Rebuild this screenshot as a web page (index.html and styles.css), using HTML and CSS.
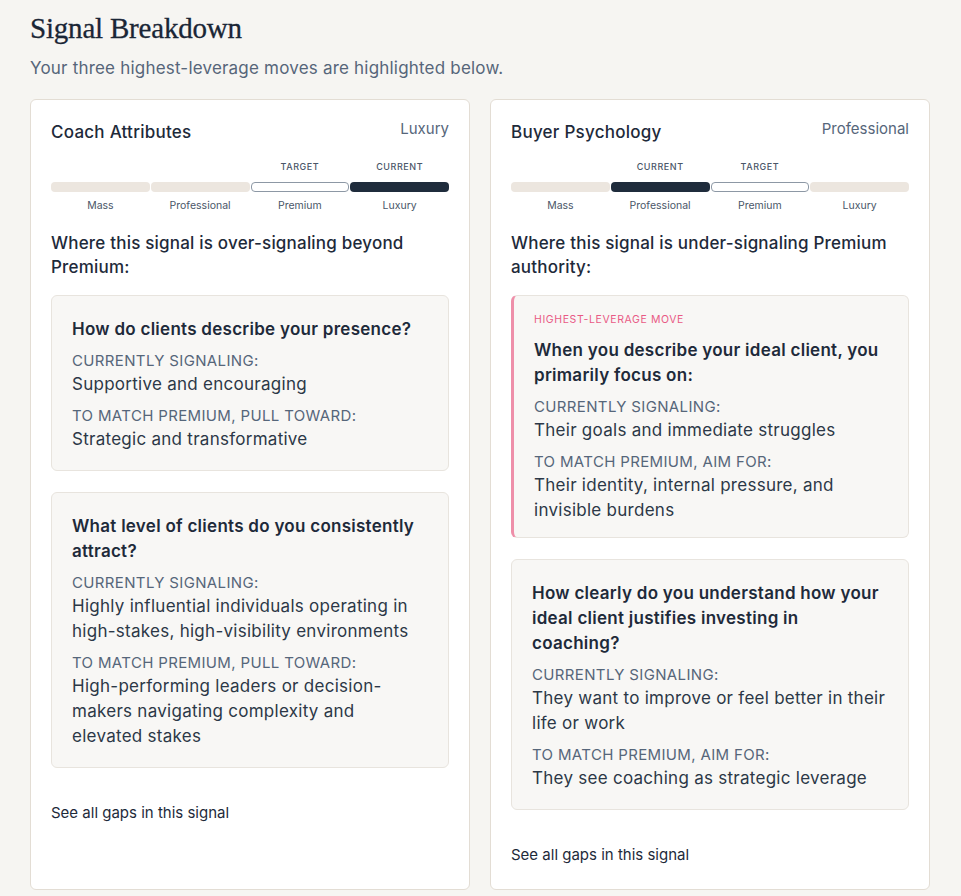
FILE: index.html
```html
<!DOCTYPE html>
<html lang="en">
<head>
<meta charset="utf-8">
<title>Signal Breakdown</title>
<link rel="stylesheet" href="styles.css">
</head>
<body>
<main class="page">
  <h1 class="title">Signal Breakdown</h1>
  <p class="subtitle">Your three highest-leverage moves are highlighted below.</p>

  <div class="grid">
    <section class="card">
      <div class="card-head">
        <h2 class="card-title">Coach Attributes</h2>
        <span class="card-level">Luxury</span>
      </div>
      <div class="scale">
        <div class="scale-row tags">
          <span></span><span></span><span>TARGET</span><span>CURRENT</span>
        </div>
        <div class="scale-row bars">
          <span class="seg"></span><span class="seg"></span><span class="seg target"></span><span class="seg current"></span>
        </div>
        <div class="scale-row names">
          <span>Mass</span><span>Professional</span><span>Premium</span><span>Luxury</span>
        </div>
      </div>
      <h3 class="gap-heading">Where this signal is over-signaling beyond Premium:</h3>
      <div class="items">
        <div class="item">
          <p class="q">How do clients describe your presence?</p>
          <p class="label">CURRENTLY SIGNALING:</p>
          <p class="value">Supportive and encouraging</p>
          <p class="label">TO MATCH PREMIUM, PULL TOWARD:</p>
          <p class="value">Strategic and transformative</p>
        </div>
        <div class="item">
          <p class="q">What level of clients do you consistently attract?</p>
          <p class="label">CURRENTLY SIGNALING:</p>
          <p class="value">Highly influential individuals operating in high-stakes, high-visibility environments</p>
          <p class="label">TO MATCH PREMIUM, PULL TOWARD:</p>
          <p class="value">High-performing leaders or decision-makers navigating complexity and elevated stakes</p>
        </div>
      </div>
      <a class="see-all" href="#">See all gaps in this signal</a>
    </section>

    <section class="card">
      <div class="card-head">
        <h2 class="card-title">Buyer Psychology</h2>
        <span class="card-level">Professional</span>
      </div>
      <div class="scale">
        <div class="scale-row tags">
          <span></span><span>CURRENT</span><span>TARGET</span><span></span>
        </div>
        <div class="scale-row bars">
          <span class="seg"></span><span class="seg current"></span><span class="seg target"></span><span class="seg"></span>
        </div>
        <div class="scale-row names">
          <span>Mass</span><span>Professional</span><span>Premium</span><span>Luxury</span>
        </div>
      </div>
      <h3 class="gap-heading">Where this signal is under-signaling Premium authority:</h3>
      <div class="items">
        <div class="item highlight">
          <p class="flag">HIGHEST-LEVERAGE MOVE</p>
          <p class="q">When you describe your ideal client, you primarily focus on:</p>
          <p class="label">CURRENTLY SIGNALING:</p>
          <p class="value">Their goals and immediate struggles</p>
          <p class="label">TO MATCH PREMIUM, AIM FOR:</p>
          <p class="value">Their identity, internal pressure, and invisible burdens</p>
        </div>
        <div class="item">
          <p class="q">How clearly do you understand how your ideal client justifies investing in coaching?</p>
          <p class="label">CURRENTLY SIGNALING:</p>
          <p class="value">They want to improve or feel better in their life or work</p>
          <p class="label">TO MATCH PREMIUM, AIM FOR:</p>
          <p class="value">They see coaching as strategic leverage</p>
        </div>
      </div>
      <a class="see-all" href="#">See all gaps in this signal</a>
    </section>
  </div>
</main>
</body>
</html>
```

FILE: styles.css
```css
* { box-sizing: border-box; }

html, body {
  margin: 0;
  padding: 0;
  background: #f6f5f2;
}

body {
  font-family: Inter, "Noto Sans", "Liberation Sans", sans-serif;
  color: #1e2a3a;
}

.page {
  padding: 10px 31px 7px 30px;
}

.title {
  margin: 0;
  font-family: "Liberation Serif", "DejaVu Serif", serif;
  font-weight: 400;
  font-size: 29px;
  line-height: 36px;
  color: #1a2636;
  letter-spacing: -0.2px;
  -webkit-text-stroke: 0.3px #1a2636;
}

.subtitle {
  margin: 10px 0 0;
  font-size: 17px;
  letter-spacing: 0.2px;
  line-height: 24px;
  color: #56667a;
}

.grid {
  margin-top: 19px;
  display: grid;
  grid-template-columns: 1fr 1fr;
  gap: 20px;
}

.card {
  background: #ffffff;
  border: 1px solid #e3ddd4;
  border-radius: 6px;
  padding: 19px 20px 24px;
  display: flex;
  flex-direction: column;
  min-height: 791px;
}

.card-head {
  display: flex;
  justify-content: space-between;
  align-items: flex-start;
}

.card-title {
  margin: 0;
  font-size: 17px;
  letter-spacing: 0.25px;
  font-weight: 500;
  line-height: 26px;
  color: #1e2a3a;
}

.card-level {
  font-size: 15px;
  line-height: 20px;
  color: #56667a;
}

.scale {
  margin-top: 16px;
}

.scale-row {
  display: grid;
  grid-template-columns: repeat(4, 1fr);
  column-gap: 1px;
  text-align: center;
}

.tags span {
  font-size: 9px;
  line-height: 12px;
  letter-spacing: 0.55px;
  font-weight: 500;
  color: #4a5668;
  height: 12px;
}

.bars {
  margin-top: 9px;
}

.seg {
  height: 10px;
  border-radius: 4px;
  background: #ece6df;
}

.seg.target {
  background: #ffffff;
  border: 1px solid #8d98a5;
}

.seg.current {
  background: #1f2c3c;
}

.names {
  margin-top: 7px;
}

.names span {
  font-size: 10.5px;
  line-height: 14px;
  color: #4a5668;
}

.gap-heading {
  margin: 18px 0 0;
  font-size: 17px;
  letter-spacing: 0.2px;
  font-weight: 500;
  line-height: 24px;
  color: #1e2a3a;
}

.items {
  margin-top: 16px;
  display: flex;
  flex-direction: column;
  gap: 21px;
}

.item {
  background: #f8f7f5;
  border: 1px solid #e8e4de;
  border-radius: 6px;
  padding: 21px 20px 18px;
}

.item.highlight {
  border-left: 3px solid #ee8fa9;
  padding: 16px 20px 14px;
}

.item p {
  margin: 0;
}

.flag {
  font-size: 10.5px;
  line-height: 16px;
  letter-spacing: 0.6px;
  color: #e95a85;
  margin-bottom: 10px !important;
}

.q {
  font-size: 17px;
  letter-spacing: 0.27px;
  font-weight: 600;
  line-height: 25px;
  color: #1e2a3a;
  margin-bottom: 8px !important;
}

.label {
  font-size: 15px;
  line-height: 22px;
  color: #56667a;
  letter-spacing: 0.35px;
}

.value {
  font-size: 17px;
  letter-spacing: 0.27px;
  line-height: 25px;
  color: #2c3847;
  margin-bottom: 8px !important;
}

.value:last-child {
  margin-bottom: 0 !important;
}

.see-all {
  margin-top: 35px;
  font-size: 15px;
  line-height: 20px;
  color: #1e2a3a;
  text-decoration: none;
}
```
